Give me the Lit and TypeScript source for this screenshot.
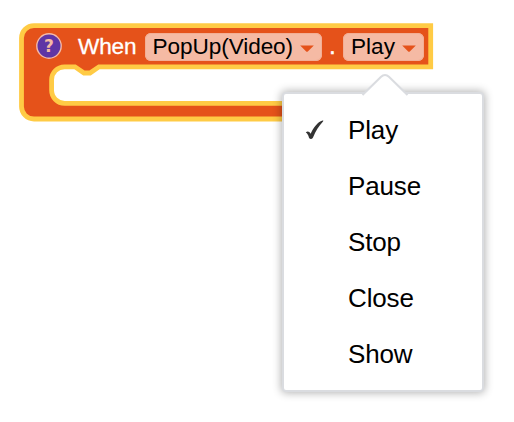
import { LitElement, html, css, svg } from "lit";
import { customElement, property, state } from "lit/decorators.js";

@customElement("block-dropdown")
class BlockDropdown extends LitElement {
  @property() label = "";

  static styles = css`
    :host {
      display: flex;
      align-items: center;
      box-sizing: border-box;
      height: 28px;
      padding: 0 8px 0 8px;
      border-radius: 6px;
      background: #f5baa4;
      box-shadow: inset 0 0 0 1px #f3ae94;
      color: #000;
      justify-content: space-between;
    }
    svg {
      width: 14px;
      height: 8px;
      margin-top: 3px;
      fill: #e5521a;
    }
  `;

  render() {
    return html`<span>${this.label}</span>
      <svg viewBox="0 0 14 8"><path d="M0.2 0.5H13.8L7.8 6.5Q7 7.2 6.2 6.5Z" /></svg>`;
  }
}

@customElement("option-menu")
class OptionMenu extends LitElement {
  @property({ attribute: false }) options: string[] = [];
  @property() selected = "";

  static styles = css`
    :host {
      display: block;
      box-sizing: border-box;
      width: 202px;
      height: 300px;
      padding: 8px 0;
      border: 2px solid #dadce0;
      border-radius: 4px;
      background: #fff;
      box-shadow: 0 0 8px 1px rgba(0, 0, 0, 0.3);
      font-size: 26px;
      letter-spacing: -0.15px;
      color: #000;
    }
    .arrow {
      position: absolute;
      left: 77px;
      top: -21px;
      width: 48px;
      height: 24px;
    }
    .item {
      display: grid;
      grid-template-columns: 64px 1fr;
      align-items: center;
      height: 56px;
    }
    .check {
      display: block;
      width: 20px;
      height: 22px;
      margin: 0 0 0 21px;
    }
  `;

  render() {
    return html`
      <svg class="arrow" viewBox="0 0 48 24">
        <path d="M2 21L20 4Q24 0.4 28 4L46 21V23H2Z" fill="#fff" />
        <path d="M1.5 22L19.8 4Q24 0 28.2 4L46.5 22" fill="none" stroke="#dadce0" stroke-width="2" />
      </svg>
      ${this.options.map(
        (o) => html`<div class="item">
          <span>
            ${o === this.selected
              ? html`<svg class="check" viewBox="0 0 20 22">
                  <path
                    d="M0.8 13.6C2.2 11.8 4.2 12 5.6 14.8C8.5 8.6 12.4 3.2 17.6 1.6C18.4 1.4 18.6 2 17.8 2.8C13.6 7.2 10.9 12 8 18.4C7.2 20.2 4.6 20.4 4 18.8C3.2 16 2.4 14.6 0.8 13.6Z"
                    fill="#333"
                  />
                </svg>`
              : null}
          </span>
          <span>${o}</span>
        </div>`
      )}
    `;
  }
}

const outline =
  "M34 25.6H430.7V66.8H99L90 73H84L75 66.8H64.5A13 13 0 0 0 51.6 79.8V90.3A13 13 0 0 0 64.6 103.3H400V119H34A12.5 12.5 0 0 1 21.5 106.5V38.1A12.5 12.5 0 0 1 34 25.6Z";

@customElement("app-root")
class AppRoot extends LitElement {
  @state() private options = ["Play", "Pause", "Stop", "Close", "Show"];
  @state() private current = "Play";

  static styles = css`
    :host {
      display: block;
      position: relative;
      width: 514px;
      height: 422px;
      overflow: hidden;
      background: #fff;
      font-family: "Liberation Sans", Arial, sans-serif;
    }
    .shape {
      position: absolute;
      inset: 0;
      width: 514px;
      height: 422px;
    }
    .row {
      position: relative;
      display: flex;
      align-items: center;
      box-sizing: border-box;
      height: 94px;
      padding: 0 0 0 36px;
      font-size: 22.6px;
      color: #fff;
    }
    .help {
      width: 26px;
      height: 26px;
      margin: -2px 16px 0 0;
    }
    .when {
      width: 66.5px;
      letter-spacing: -0.15px;
      -webkit-text-stroke: 0.3px #fff;
    }
    .target {
      width: 177.5px;
      letter-spacing: -0.08px;
    }
    .dot {
      width: 21px;
      text-align: center;
      -webkit-text-stroke: 0.6px #fff;
    }
    .method {
      width: 80.5px;
    }
    .menu {
      position: absolute;
      left: 282px;
      top: 92px;
    }
    .q {
      font: bold 17px "DejaVu Sans", sans-serif;
    }
  `;

  render() {
    return html`
      <svg class="shape" viewBox="0 0 514 422">
        <path d=${outline} fill="#e5521a" stroke="#ffcb45" stroke-width="4.8" />
      </svg>
      <div class="row">
        <svg class="help" viewBox="0 0 26 26">
          <circle cx="13" cy="13" r="12.2" fill="#5f35a5" stroke="#f3b9a8" stroke-width="1.4" />
          ${svg`<text class="q" x="13" y="19" text-anchor="middle" fill="#f5baa4">?</text>`}
        </svg>
        <span class="when">When</span>
        <block-dropdown class="target" label="PopUp(Video)"></block-dropdown>
        <span class="dot">.</span>
        <block-dropdown class="method" label=${this.current}></block-dropdown>
      </div>
      <option-menu class="menu" .options=${this.options} .selected=${this.current}></option-menu>
    `;
  }
}
